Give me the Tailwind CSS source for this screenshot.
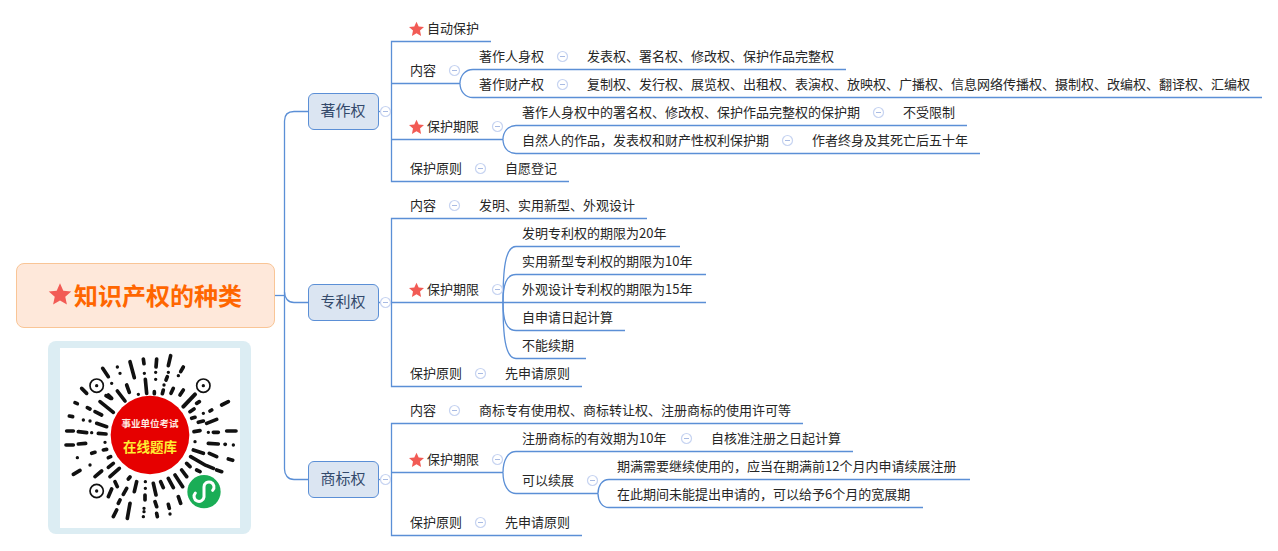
<!DOCTYPE html>
<html lang="zh-CN">
<head>
<meta charset="UTF-8">
<title>知识产权的种类</title>
<script src="https://cdn.jsdelivr.net/npm/@tailwindcss/browser@4"></script>
</head>
<body class="bg-white">
<div class="relative w-[1278px] h-[551px] overflow-hidden bg-white text-[13px] leading-[18px] text-[#262626] font-['Noto_Sans_CJK_SC','Noto_Sans',sans-serif] [&>span]:absolute [&>span]:whitespace-nowrap">

  <!-- connectors -->
  <svg class="absolute left-0 top-0" width="1278" height="551" fill="none" stroke="#5b8fd6" stroke-width="1.3">
    <defs>
      <g id="fold">
        <circle r="5" fill="#fff" stroke="#c7d4f1" stroke-width="1.2"/>
        <path d="M-2.5 0H2.5" stroke="#a9bbe3" stroke-width="1"/>
      </g>
      <path id="star" stroke="none" fill="#f25b55" d="M0-7.8 2.2-2.9 7.5-2.4 3.5 1.1 4.6 6.4 0 3.7 -4.6 6.4 -3.5 1.1 -7.5-2.4 -2.2-2.9Z"/>
    </defs>

    <!-- root to branches -->
    <path d="M275 295.5H284.5"/>
    <path d="M308 111.5H294C288 111.5 284.5 115 284.5 121V469C284.5 475 288 479.5 294 479.5H308"/>
    <path d="M284.5 292C284.5 298 288 302.5 294 302.5H308"/>

    <!-- 著作权 -->
    <path d="M379 111.5H385"/>
    <path d="M491 41.5H391.5V181.5H569"/>
    <path d="M391.5 83.5H460"/>
    <path d="M460 83.5C460 76 465 69.5 473 69.5H846"/>
    <path d="M460 83.5C460 91 465 97.5 473 97.5H1262"/>
    <path d="M391.5 139.5H503"/>
    <path d="M503 139.5C503 132 508 125.5 516 125.5H967"/>
    <path d="M503 139.5C503 147 508 153.5 516 153.5H980"/>

    <!-- 专利权 -->
    <path d="M379 302.5H503"/>
    <path d="M647 218.5H391.5V386.5H582"/>
    <path d="M503 302.5C503 270 505 246.5 516 246.5H680"/>
    <path d="M503 302.5C503 285 506 274.5 516 274.5H706"/>
    <path d="M503 302.5H706"/>
    <path d="M503 302.5C503 320 506 330.5 516 330.5H625"/>
    <path d="M503 302.5C503 335 505 358.5 516 358.5H586"/>

    <!-- 商标权 -->
    <path d="M379 479.5H385"/>
    <path d="M803 423.5H391.5V535.5H582"/>
    <path d="M391.5 472.5H503"/>
    <path d="M503 472.5C503 460 508 451.5 516 451.5H853"/>
    <path d="M503 472.5C503 485 508 493.5 516 493.5H598"/>
    <path d="M598 493.5C598 486 602 479.5 609 479.5H970"/>
    <path d="M598 493.5C598 501 602 507.5 609 507.5H923"/>

    <use href="#fold" x="385.5" y="111.5"/>
    <use href="#fold" x="454.5" y="70.5"/>
    <use href="#fold" x="562.5" y="56.5"/>
    <use href="#fold" x="562.5" y="84.5"/>
    <use href="#fold" x="497.5" y="126.5"/>
    <use href="#fold" x="878.5" y="112.5"/>
    <use href="#fold" x="787.5" y="140.5"/>
    <use href="#fold" x="480.5" y="168.5"/>

    <use href="#fold" x="385.5" y="302.5"/>
    <use href="#fold" x="454.5" y="205.5"/>
    <use href="#fold" x="497.5" y="289.5"/>
    <use href="#fold" x="480.5" y="373.5"/>

    <use href="#fold" x="385.5" y="479.5"/>
    <use href="#fold" x="454.5" y="410.5"/>
    <use href="#fold" x="497.5" y="459.5"/>
    <use href="#fold" x="686.5" y="438.5"/>
    <use href="#fold" x="592.5" y="480.5"/>
    <use href="#fold" x="480.5" y="522.5"/>

    <use href="#star" x="416.5" y="29.5"/>
    <use href="#star" x="416.5" y="127.5"/>
    <use href="#star" x="416.5" y="290.5"/>
    <use href="#star" x="416.5" y="460.5"/>
  </svg>

  <!-- root -->
  <div class="absolute left-[16px] top-[263px] w-[259px] h-[65px] flex items-center justify-center gap-[2px] pb-[2px] pr-[1px] rounded-lg border border-[#f9c596] bg-[#fee8da]">
    <svg width="24" height="24" viewBox="-8 -8 16 16"><path fill="#f25b55" d="M0-7.8 2.2-2.9 7.5-2.4 3.5 1.1 4.6 6.4 0 3.7 -4.6 6.4 -3.5 1.1 -7.5-2.4 -2.2-2.9Z"/></svg>
    <span class="text-[24px] leading-[30px] font-bold text-[#ff6600]">知识产权的种类</span>
  </div>

  <!-- branches -->
  <div class="absolute left-[308px] top-[93px] w-[71px] h-[37px] flex items-center justify-center pb-[3px] pr-[1px] rounded-md border border-[#5b8fd6] bg-[#dbe5f2] text-[15px] text-[#33496b]">著作权</div>
  <div class="absolute left-[308px] top-[284px] w-[71px] h-[37px] flex items-center justify-center pb-[3px] pr-[1px] rounded-md border border-[#5b8fd6] bg-[#dbe5f2] text-[15px] text-[#33496b]">专利权</div>
  <div class="absolute left-[308px] top-[461px] w-[71px] h-[37px] flex items-center justify-center pb-[3px] pr-[1px] rounded-md border border-[#5b8fd6] bg-[#dbe5f2] text-[15px] text-[#33496b]">商标权</div>

  <!-- 著作权 nodes -->
  <span class="left-[427px] top-[19px]">自动保护</span>
  <span class="left-[410px] top-[61px]">内容</span>
  <span class="left-[479px] top-[47px]">著作人身权</span>
  <span class="left-[587px] top-[47px]">发表权、署名权、修改权、保护作品完整权</span>
  <span class="left-[479px] top-[75px]">著作财产权</span>
  <span class="left-[587px] top-[75px]">复制权、发行权、展览权、出租权、表演权、放映权、广播权、信息网络传播权、摄制权、改编权、翻译权、汇编权</span>
  <span class="left-[427px] top-[117px]">保护期限</span>
  <span class="left-[522px] top-[103px]">著作人身权中的署名权、修改权、保护作品完整权的保护期</span>
  <span class="left-[903px] top-[103px]">不受限制</span>
  <span class="left-[522px] top-[131px]">自然人的作品，发表权和财产性权利保护期</span>
  <span class="left-[812px] top-[131px]">作者终身及其死亡后五十年</span>
  <span class="left-[410px] top-[159px]">保护原则</span>
  <span class="left-[505px] top-[159px]">自愿登记</span>

  <!-- 专利权 nodes -->
  <span class="left-[410px] top-[196px]">内容</span>
  <span class="left-[479px] top-[196px]">发明、实用新型、外观设计</span>
  <span class="left-[427px] top-[280px]">保护期限</span>
  <span class="left-[522px] top-[224px]">发明专利权的期限为20年</span>
  <span class="left-[522px] top-[252px]">实用新型专利权的期限为10年</span>
  <span class="left-[522px] top-[280px]">外观设计专利权的期限为15年</span>
  <span class="left-[522px] top-[308px]">自申请日起计算</span>
  <span class="left-[522px] top-[336px]">不能续期</span>
  <span class="left-[410px] top-[364px]">保护原则</span>
  <span class="left-[505px] top-[364px]">先申请原则</span>

  <!-- 商标权 nodes -->
  <span class="left-[410px] top-[401px]">内容</span>
  <span class="left-[479px] top-[401px]">商标专有使用权、商标转让权、注册商标的使用许可等</span>
  <span class="left-[427px] top-[450px]">保护期限</span>
  <span class="left-[522px] top-[429px]">注册商标的有效期为10年</span>
  <span class="left-[711px] top-[429px]">自核准注册之日起计算</span>
  <span class="left-[522px] top-[471px]">可以续展</span>
  <span class="left-[617px] top-[457px]">期满需要继续使用的，应当在期满前12个月内申请续展注册</span>
  <span class="left-[617px] top-[485px]">在此期间未能提出申请的，可以给予6个月的宽展期</span>
  <span class="left-[410px] top-[513px]">保护原则</span>
  <span class="left-[505px] top-[513px]">先申请原则</span>

  <!-- mini program code -->
  <div class="absolute left-[48px] top-[341px] w-[203px] h-[193px] rounded-lg bg-[#dcedf3] px-[12px] py-[7px]">
    <div class="relative w-[180px] h-[180px] bg-white">
      <svg class="absolute left-[-20px] top-[-13px] blur-[0.3px]" width="220" height="205" viewBox="0 0 660 615" fill="none" stroke="#111" stroke-linecap="round">
        <path stroke-width="11" d="M392 62 385 92M310 72 312 86M350 72 348 96M430 96 422 110M270 80 283 128M188 100 205 125M378 135 382 125M260 150 268 172M316 133 320 175M400 160 393 175M430 165 420 180M343 170 343 176M367 176 370 165M205 180 215 190M232 168 255 198M125 160 140 175M105 203 112 206M142 218 150 222M180 200 220 232M198 182 212 190M165 230 185 240M88 243 98 245M170 265 200 275M80 288 100 288M115 290 140 293M175 295 198 297M78 330 100 330M115 327 137 325M155 355 165 352M190 345 200 343M205 368 212 365M100 418 120 406M165 425 185 408M205 397 220 385M210 425 238 400"/>
        <path stroke-width="12" d="M465 178 430 215"/>
        <path stroke-width="11" d="M545 210 565 200M510 228 515 225M455 250 465 247M500 265 530 253M475 262 490 258M520 292 535 292M560 288 588 288M462 290 480 287M505 325 535 327M460 345 490 355M508 355 530 365M565 372 578 376M452 365 495 390M500 392 520 400M530 405 545 410M440 385 450 395M470 405 480 410M425 405 440 425M405 420 428 455M385 430 400 458M362 440 370 458M340 445 348 480M290 440 283 470M260 460 250 478M225 440 232 455M215 462 205 485M315 480 315 495M270 505 262 550M240 495 235 505M230 525 220 545M345 500 350 515M350 535 352 545M385 508 388 520M415 485 422 505M265 432 270 426M450 230 462 222M470 205 478 200M555 328 556 328"/>
        <path stroke-width="10" d="M232 96h.1M240 115h.1M313 115h.1M347 112h.1M347 133h.1M385 112h.1M415 122h.1M215 145h.1M372 150h.1M295 178h.1M130 255h.1M150 258h.1M155 293h.1M195 322h.1M112 368h.1M150 390h.1M490 235h.1M505 292h.1M465 320h.1M580 330h.1M316 440h.1M316 460h.1M312 520h.1M312 530h.1M310 545h.1M390 537h.1"/>
        <g stroke-width="5">
          <circle cx="170" cy="152" r="20"/><circle cx="490" cy="152" r="20"/><circle cx="170" cy="468" r="20"/>
        </g>
        <g fill="#111" stroke="none">
          <circle cx="170" cy="152" r="5"/><circle cx="490" cy="152" r="5"/><circle cx="170" cy="468" r="5"/>
        </g>
        <circle cx="330" cy="300" r="118" fill="#e60000" stroke="none"/>
        <circle cx="492" cy="470" r="50" fill="#1aad56" stroke="none"/>
        <path stroke="#fff" stroke-width="9" d="M466 474A15 15 0 1 0 492 486V456A15 15 0 1 1 518 466"/>
      </svg>
      <div class="absolute left-[52px] top-[69px] w-[76px] text-center text-[9.5px] leading-[12px] font-bold text-[#ffe9e0]">事业单位考试</div>
      <div class="absolute left-[52px] top-[89px] w-[76px] text-center text-[13.5px] leading-[18px] font-bold text-[#ffee33]">在线题库</div>
    </div>
  </div>
</div>
</body>
</html>
